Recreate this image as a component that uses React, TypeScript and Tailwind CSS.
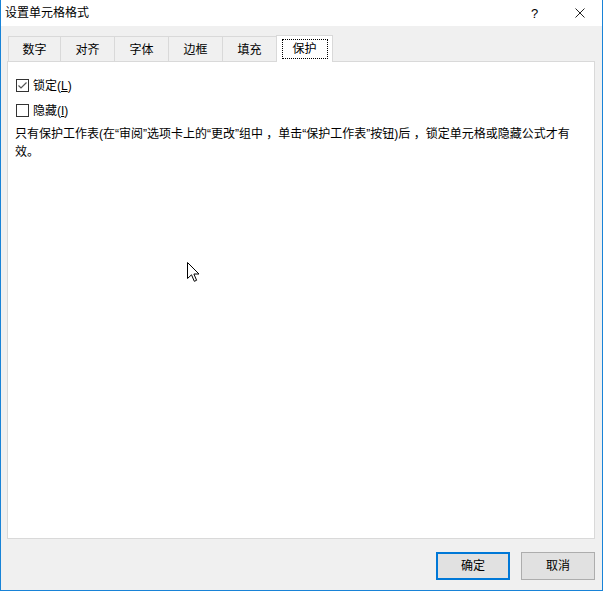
import React from 'react';

const tabs = ['数字', '对齐', '字体', '边框', '填充'];

const Check = ({ checked }: { checked: boolean }) => (
  <span className="w-[13px] h-[13px] border border-[#333333] bg-white flex items-center justify-center shrink-0">
    {checked && (
      <svg width="11" height="11" viewBox="0 0 11 11">
        <polyline points="1.5,5.5 4,8 9.5,2.5" fill="none" stroke="#555555" strokeWidth="1.2" />
      </svg>
    )}
  </span>
);

const App: React.FC = () => {
  return (
    <div className="relative w-[603px] h-[591px] bg-[#f0f0f0] border-x border-b border-[#1883d7] flex flex-col text-[12px] text-black font-['Liberation_Sans','Noto_Sans_CJK_SC',sans-serif] select-none">
      {/* 标题栏 */}
      <div className="h-[26px] bg-white flex items-center shrink-0">
        <span className="pl-[4px] leading-[14px]">设置单元格格式</span>
        <div className="ml-auto flex items-center h-full">
          <span className="w-[45px] text-center text-[13px] leading-none">?</span>
          <span className="w-[45px] h-full flex items-center justify-center">
            <svg width="10" height="10" viewBox="0 0 10 10">
              <path d="M0.5 0.5 L9.5 9.5 M9.5 0.5 L0.5 9.5" stroke="#222" strokeWidth="1" />
            </svg>
          </span>
        </div>
      </div>

      <div className="flex-1 flex flex-col pl-[6px] pr-[7px] pt-[9px]">
        {/* 选项卡 */}
        <div className="flex items-end pl-[1px] h-[27px] relative z-10 -mb-[1px]">
          {tabs.map((t, i) => (
            <div
              key={t}
              className={`${i === 0 ? 'w-[52px]' : 'w-[54px]'} h-[25px] mb-[1px] border-l border-t border-[#d9d9d9] bg-[#f0f0f0] flex items-center justify-center leading-[14px] pt-[1px]`}
            >
              {t}
            </div>
          ))}
          <div className="w-[57px] h-[27px] border-x border-t border-[#d9d9d9] bg-white flex items-center justify-center pb-[1px]">
            <span className="w-[46px] h-[20px] border border-dotted border-black flex items-center justify-center leading-[14px]">
              保护
            </span>
          </div>
        </div>

        {/* 面板 */}
        <div className="h-[478px] bg-white border border-[#d9d9d9] pl-[8px] pt-[17px]">
          <label className="flex items-center gap-[4px] h-[13px]">
            <Check checked />
            <span className="leading-[14px]">
              锁定(<span className="underline">L</span>)
            </span>
          </label>
          <label className="flex items-center gap-[4px] h-[13px] mt-[12px]">
            <Check checked={false} />
            <span className="leading-[14px]">
              隐藏(<span className="underline">I</span>)
            </span>
          </label>
          <p className="mt-[8px] -ml-[1px] leading-[18px]">
            只有保护工作表(在“审阅”选项卡上的“更改”组中 ，单击“保护工作表”按钮)后 ，锁定单元格或隐藏公式才有
            <br />
            效。
          </p>
        </div>

        {/* 按钮 */}
        <div className="flex justify-end gap-[11px] pt-[13px]">
          <button className="w-[74px] h-[28px] bg-[#e1e1e1] border-2 border-[#0078d7] leading-[14px]">确定</button>
          <button className="w-[74px] h-[28px] bg-[#e1e1e1] border border-[#adadad] leading-[14px]">取消</button>
        </div>
      </div>

      {/* 鼠标指针 */}
      <svg className="absolute left-[186px] top-[262px]" width="13" height="21" viewBox="0 0 13 21">
        <path d="M0.5 0.5 L0.5 16.5 L4.5 12.8 L7.3 19.3 L9.6 18.3 L6.9 12 L12 12 Z" fill="white" stroke="black" strokeWidth="1" />
      </svg>
    </div>
  );
};

export default App;
